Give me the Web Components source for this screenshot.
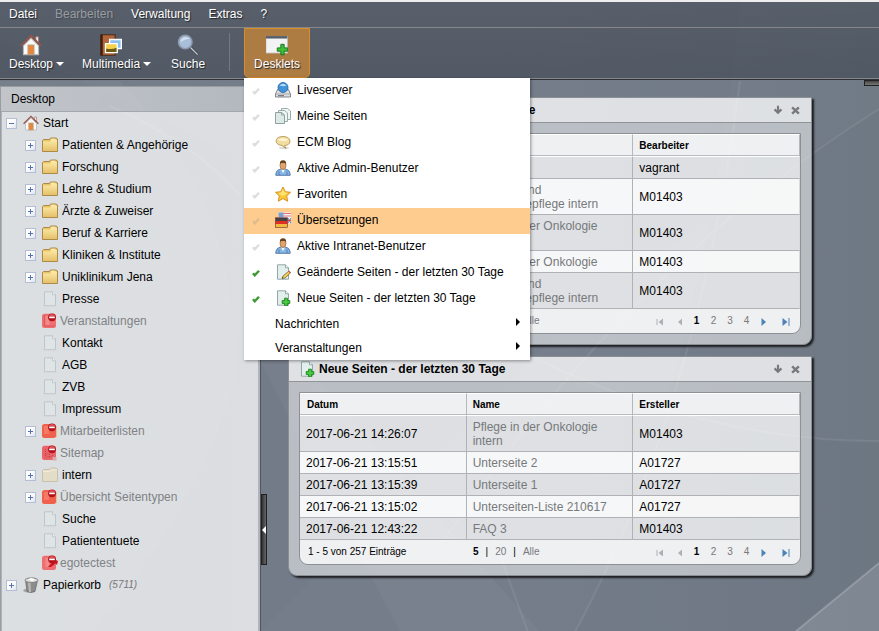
<!DOCTYPE html>
<html lang="de">
<head>
<meta charset="utf-8">
<title>Desktop</title>
<style>
    html, body {
        margin: 0;
        height: 100%;
    }
    body {
        font: 12px/14px 'Liberation Sans', Arial, sans-serif;
        color: #000000;
    }
</style>
</head>
<body>
<ecm-desktop>
    <ecm-menubar slot="header"></ecm-menubar>
    <ecm-toolbar slot="header">
        <ecm-tool icon="home" arrow>Desktop</ecm-tool>
        <ecm-tool icon="media" arrow>Multimedia</ecm-tool>
        <ecm-tool icon="search">Suche</ecm-tool>
        <ecm-tool icon="desklet" slot="end" active>Desklets
            <ecm-menu slot="menu">
                <ecm-item icon="server">Liveserver</ecm-item>
                <ecm-item icon="pages">Meine Seiten</ecm-item>
                <ecm-item icon="bubble">ECM Blog</ecm-item>
                <ecm-item icon="user">Aktive Admin-Benutzer</ecm-item>
                <ecm-item icon="star">Favoriten</ecm-item>
                <ecm-item icon="flags" selected>Übersetzungen</ecm-item>
                <ecm-item icon="user">Aktive Intranet-Benutzer</ecm-item>
                <ecm-item icon="pageedit" checked>Geänderte Seiten - der letzten 30 Tage</ecm-item>
                <ecm-item icon="pagenew" checked>Neue Seiten - der letzten 30 Tage</ecm-item>
                <ecm-item submenu>Nachrichten</ecm-item>
                <ecm-item submenu>Veranstaltungen</ecm-item>
            </ecm-menu>
        </ecm-tool>
    </ecm-toolbar>
    <ecm-sidebar slot="sidebar" heading="Desktop">
        <ecm-node icon="home" toggle="minus">Start</ecm-node>
        <ecm-node level="2" icon="folder" toggle="plus">Patienten &amp; Angehörige</ecm-node>
        <ecm-node level="2" icon="folder" toggle="plus">Forschung</ecm-node>
        <ecm-node level="2" icon="folder" toggle="plus">Lehre &amp; Studium</ecm-node>
        <ecm-node level="2" icon="folder" toggle="plus">Ärzte &amp; Zuweiser</ecm-node>
        <ecm-node level="2" icon="folder" toggle="plus">Beruf &amp; Karriere</ecm-node>
        <ecm-node level="2" icon="folder" toggle="plus">Kliniken &amp; Institute</ecm-node>
        <ecm-node level="2" icon="folder" toggle="plus">Uniklinikum Jena</ecm-node>
        <ecm-node level="2" icon="page">Presse</ecm-node>
        <ecm-node level="2" icon="lockedpage" locked>Veranstaltungen</ecm-node>
        <ecm-node level="2" icon="page">Kontakt</ecm-node>
        <ecm-node level="2" icon="page">AGB</ecm-node>
        <ecm-node level="2" icon="page">ZVB</ecm-node>
        <ecm-node level="2" icon="page">Impressum</ecm-node>
        <ecm-node level="2" icon="lockedfolder" toggle="plus" locked>Mitarbeiterlisten</ecm-node>
        <ecm-node level="2" icon="lockedmap" locked>Sitemap</ecm-node>
        <ecm-node level="2" icon="palefolder" toggle="plus">intern</ecm-node>
        <ecm-node level="2" icon="lockedfolder" toggle="plus" locked>Übersicht Seitentypen</ecm-node>
        <ecm-node level="2" icon="page">Suche</ecm-node>
        <ecm-node level="2" icon="page">Patiententuete</ecm-node>
        <ecm-node level="2" icon="lockedlink" locked>egotectest</ecm-node>
        <ecm-node icon="trash" toggle="plus" count="(5711)">Papierkorb</ecm-node>
    </ecm-sidebar>
    <ecm-window icon="pageedit" heading="Geänderte Seiten - der letzten 30 Tage">
        <ecm-list id="changed"></ecm-list>
    </ecm-window>
    <ecm-window icon="pagenew" heading="Neue Seiten - der letzten 30 Tage">
        <ecm-list id="created"></ecm-list>
    </ecm-window>
</ecm-desktop>

<script>
(() => {
    const stop = `
        <circle cx="10" cy="4.300" r="3.900" fill="#b3121b"/>
        <path d="M6.800 3a3.600 3.600 0 0 1 6.400 0z" fill="#d9555a"/>
        <rect x="7.200" y="3.500" width="5.600" height="1.700" fill="#fff"/>`;
    const sheet = `
        <path d="M2.500 .8h8l3 3v11.400h-11z" fill="#e2efec" stroke="#93a7a8"/>
        <path d="M10.500 .8v3h3" fill="#fff" stroke="#93a7a8"/>`;
    const icons = {
        home: `
            <path d="M2.500 8.500v6.500h11v-6.500l-5.500-5.500z" fill="#fafafa" stroke="#b9b9b9" stroke-width=".8"/>
            <path d="M11.500 2h2v5l-2-2z" fill="#eee" stroke="#a07068" stroke-width=".6"/>
            <path d="M.6 8.700L8 1.300l7.400 7.400" fill="none" stroke="#94544a" stroke-width="1.300"/>
            <rect x="5.800" y="8" width="4.400" height="7" fill="#e8863a" stroke="#b9a08c" stroke-width=".7"/>`,
        media: `
            <path d="M.5 .5h10.500v15H.5z" fill="#b0663a" stroke="#4a2a1a" stroke-width=".8"/>
            <path d="M.5 .5h1.500v15H.5z" fill="#40200f"/>
            <path d="M7 4h8.500v6.500H7z" fill="#8cc0f0" stroke="#fff"/>
            <path d="M4 7h8.500v6.500H4z" fill="#f5d04a" stroke="#fff"/>
            <path d="M4.500 10.500q4 1 7.500-.5v3h-7.500z" fill="#6d5a14"/>`,
        search: `
            <path d="M9.800 9.800L15 15" stroke="#3a4049" stroke-width="2"/>
            <path d="M9.800 9.800L15 15" stroke="#c8ccd2" stroke-width="1"/>
            <circle cx="6" cy="5.800" r="4.900" fill="#a9bfd9" stroke="#8c9bb0" stroke-width="1.200"/>
            <path d="M2.500 6a4 4 0 0 1 7-2.500q-3 0-7 2.500z" fill="#d0deee"/>`,
        desklet: `
            <rect x="0" y="1.800" width="15.500" height="12" fill="#f3f3f3" stroke="#c9c9c9" stroke-width=".6"/>
            <rect x="0" y="1.500" width="15.500" height="1.800" fill="#55606c"/>
            <path d="M10.800 7.500h2.400v2.600h2.600v2.400h-2.600v2.600h-2.400v-2.600H8.200v-2.400h2.600z" fill="#3fbf35" stroke="#16751c" stroke-width=".7"/>`,
        folder: `
            <path d="M.5 3.500l1-1h6l1-1.500h5.500l1.500 1v12.500H.5z" fill="#e9c468" stroke="#a5823c" stroke-width=".9"/>
            <path d="M1 4.500h7l1.500-1.500H15v11H1z" fill="url(#f)"/>
            <path d="M9 2.300h4.500" stroke="#fff5cf"/>
            <defs><linearGradient id="f" x2="0" y2="1"><stop stop-color="#fbeaa4"/><stop offset="1" stop-color="#e5c06b"/></linearGradient></defs>`,
        palefolder: `
            <path d="M.5 3.500l1-1h6l1-1.500h5.500l1.500 1v12.500H.5z" fill="#e3dcc7" stroke="#c5bda8" stroke-width=".9"/>
            <path d="M1 4.500h7l1.500-1.500H15" fill="none" stroke="#f2edda"/>`,
        page: `
            <path d="M2.500 .8h8l3 3v10.700h-11z" fill="#dfe5e6" stroke="#bdc7cb"/>
            <path d="M10.500 .8v3h3" fill="#f3f5f5" stroke="#bdc7cb"/>
            <path d="M1.500 14.800h13" stroke="#c9ced1"/>`,
        lockedpage: `<rect x="0" y=".8" width="14" height="14.200" rx="2.500" fill="#ed6f71"/>
            <path d="M2.500 2v11h10" fill="none" stroke="#dc5054" stroke-width=".8"/>
            <path d="M3.500 3h4v9h-4z" fill="#f38a89"/>${stop}`,
        lockedfolder: `<path d="M12 3h3v11h-3z" fill="#e1c389"/>
            <rect x="0" y="1" width="14" height="14" rx="2.500" fill="#f0604f"/>
            <path d="M2 3h5v8H2z" fill="#f47a66"/>${stop}`,
        lockedmap: `<rect x="0" y=".8" width="14" height="14.200" rx="2.500" fill="#ea6569"/>
            <path d="M3.500 4v8h7V9M3.500 9h4v4" fill="none" stroke="#b83a45" stroke-width=".8" stroke-dasharray="1 1"/>
            <path d="M10.500 12h4v3.500h-4z" fill="#dba9aa"/>${stop}`,
        lockedlink: `<rect x="0" y=".8" width="14" height="14.200" rx="2.500" fill="#ed6f71"/>
            <path d="M3.500 3h4v9h-4z" fill="#f38a89"/>
            <path d="M6 12l3.500-4-1.500-2 4-2 4 2-1 4-1.500-1.500L9 12z" fill="#cc1720"/>${stop}`,
        trash: `
            <ellipse cx="6" cy="13.500" rx="5.800" ry="2" fill="#a4a6a9"/>
            <path d="M2.500 3.500l1.500 11q4 1.800 8 0l2.500-11z" fill="#8c8c8c" stroke="#666" stroke-width=".7"/>
            <path d="M5 5.500l1 9.500h2l-.5-9.500z" fill="#b9b9b9"/>
            <ellipse cx="8.500" cy="3.200" rx="6.500" ry="2.300" fill="#dcdcdc" stroke="#858585"/>
            <path d="M5 2.500l3-1.500 4 1.300-2 2z" fill="#fff"/>`,
        server: `
            <path d="M2.500 7.500h11l2 4.500v3H.5v-3z" fill="#dddfe3" stroke="#777b84" stroke-width=".9"/>
            <path d="M1 12h14" stroke="#a3a6ad"/><path d="M3 13.700h6" stroke="#60646c"/>
            <circle cx="8" cy="5.500" r="5" fill="#4293d8" stroke="#23609f" stroke-width=".8"/>
            <path d="M4.500 3.500q3.500-3.500 7 0-3 1.500-7 0z" fill="#b3ddf8"/>`,
        pages: `
            <path d="M6.500.5h6l3 2.500v8.500h-9z" fill="#eef5f3" stroke="#8fa5a4" stroke-width=".9"/>
            <path d="M3.500 2.500h6l3 2.500v8.500h-9z" fill="#eef5f3" stroke="#8fa5a4" stroke-width=".9"/>
            <path d="M.5 4.500h6l3 2.500v8.500h-9z" fill="#dce9e5" stroke="#849a99" stroke-width=".9"/>
            <path d="M6.500 4.500V7h3" fill="none" stroke="#849a99" stroke-width=".8"/>`,
        bubble: `
            <ellipse cx="9" cy="14" rx="5" ry="1.200" fill="#dddddd"/>
            <path d="M8 2.500c9 0 9 9 1.500 9l1.500 3-4-3C-1 11-1 2.500 8 2.500z" fill="#f2dda0" stroke="#b49551" stroke-width=".9"/>
            <path d="M2.500 6q5-3.500 11 0-4 2-11 0z" fill="#fff6d4"/>`,
        user: `
            <path d="M.8 15.300q0-5.300 4.500-6h5.400q4.500.7 4.500 6z" fill="#87b6e6" stroke="#47719f" stroke-width=".9"/>
            <path d="M6 9.300l2 4 2-4z" fill="#f5f8fc"/>
            <ellipse cx="8" cy="5.500" rx="3" ry="4" fill="#dfa36b" stroke="#8d592f" stroke-width=".6"/>
            <path d="M4.900 4.500q-.4-4.200 3.100-4.200t3.100 4.200L10 3H6z" fill="#654321"/>
            <path d="M4 11.500v3.500M12 11.500v3.500" stroke="#47719f" stroke-width=".8"/>`,
        star: `
            <path d="M8 1l2.300 4.700 5.200.6-3.800 3.600 1 5.300L8 12.600l-4.700 2.600 1-5.300L.5 6.300l5.200-.6z" fill="#fbc834" stroke="#d18a1e" stroke-width=".9" stroke-linejoin="round"/>
            <path d="M8 3l1.500 3.500 3.500.5-5 3-5-3 3.500-.5z" fill="#fee27a"/>`,
        flags: `
            <rect x="3.500" y=".5" width="12.500" height="11" fill="#f3f3fa"/>
            <path d="M8 1.500h8M8 4h8" stroke="#e2757a"/>
            <rect x="3.500" y=".5" width="5" height="5" fill="#7f9fcb"/>
            <path d="M13 6l3 5.500M16 6l-3 5" stroke="#5f80b8"/>
            <path d="M12.500 8.500h3.500" stroke="#d8444c" stroke-width="1.300"/>
            <rect x=".5" y="5.800" width="12" height="3.200" fill="#444"/>
            <rect x=".5" y="9" width="12" height="3.200" fill="#e02c22"/>
            <rect x=".5" y="12.200" width="12" height="3" fill="#f0b93a"/>
            <rect x=".5" y="5.800" width="12" height="9.600" fill="none" stroke="#762724" stroke-width=".6"/>`,
        pageedit: `${sheet}
            <path d="M7 14.500l1-2.500 6-5 1.700 1.700-5.700 5.300z" fill="#f1d15e" stroke="#7c6228" stroke-width=".8"/>
            <path d="M13.200 7.600l1-.9 1.600 1.600-.9 1z" fill="#d95a52"/>
            <path d="M7 14.500l.5-1.400.9.800z" fill="#333"/>`,
        pagenew: `${sheet}
            <path d="M9.600 8.200h2.800v2.400h2.400v2.800h-2.400v2.400H9.600v-2.400H7.200v-2.800h2.400z" fill="#4ccb43" stroke="#15821d" stroke-width=".9"/>`,
        check: `<path d="M2 8.500l3.500 4L14 3.500" fill="none" stroke="currentColor" stroke-width="5"/>`,
        down: `<path d="M8 1v10M2.500 7L8 12.500 13.500 7" fill="none" stroke="currentColor" stroke-width="3.400"/>`,
        close: `<path d="M2 2.500l12 11M14 2.500l-12 11" stroke="currentColor" stroke-width="4.400"/>`,
        first: `<path d="M2 2v12" stroke="currentColor" stroke-width="2"/><path d="M14 1v14L5 8z" fill="currentColor"/>`,
        prev: `<path d="M12 1v14L4 8z" fill="currentColor"/>`,
        next: `<path d="M3 0v16l9-8z" fill="currentColor"/>`,
        last: `<path d="M14 0v16" stroke="currentColor" stroke-width="2"/><path d="M1 0v16l10-8z" fill="currentColor"/>`
    };

    const svg = (name, size) => `<svg width="${size}" height="${size}" viewBox="0 0 16 16" aria-hidden="true">${icons[name]}</svg>`;

    // attributes are read when the element is connected, so markup order does not matter
    class Base extends HTMLElement {
        constructor() {
            super();
            this.attachShadow({ mode: 'open' });
        }
        connectedCallback() {
            this.shadowRoot.innerHTML = this.render();
        }
        attr(name) {
            return this.getAttribute(name) || '';
        }
    }

    const rays = encodeURIComponent(`
        <svg xmlns="http://www.w3.org/2000/svg" viewBox="0 0 879 631" preserveAspectRatio="xMidYMid slice">
            <g fill="#fff">
                <path d="M795 631l84-69v69z" fill-opacity=".13"/>
                <path d="M575 631Q700 400 740 0h139v108Q600 280 520 370L260 631z" fill-opacity=".02"/>
                <path d="M0 40L330 200 520 360Q690 440 879 440V0H0z" fill-opacity=".02"/>
                <path d="M0 80h120Q240 200 235 380 190 520 90 631H0z" fill-opacity=".03"/>
                <path d="M260 360l40 0 240 271H400z" fill-opacity=".03"/>
            </g>
            <g fill="none" stroke="#fff" stroke-opacity=".08" stroke-width="2">
                <path d="M795 631l84-69" stroke-opacity=".2"/>
                <path d="M575 631Q700 400 740 80"/>
                <path d="M879 108Q620 270 430 560"/>
                <path d="M520 350Q700 440 879 440"/>
                <path d="M480 500l48 131"/>
                <path d="M110 105q90 40 130 90"/>
            </g>
        </svg>`);

    customElements.define('ecm-desktop', class extends Base {
        render() {
            return `
            <style>
                :host {
                    display: flex;
                    flex-direction: column;
                    min-height: 100vh;
                    box-sizing: border-box;
                    border-top: 2px solid #efeeec;
                    background: url("data:image/svg+xml,${rays}") center / cover, linear-gradient(90deg, #727b87, #737b89 60%, #6d7782);
                }
                header {
                    position: relative;
                    z-index: 2;
                    border-bottom: 1px solid #2f3339;
                    background: linear-gradient(rgba(60,66,76,0.5), rgba(50,57,67,0.52));
                }
                main {
                    flex: 1;
                    display: flex;
                    position: relative;
                }
                .canvas {
                    flex: 1;
                    min-width: 0;
                    display: flex;
                    flex-direction: column;
                    gap: 11px;
                    padding: 17px 67px 17px 27px;
                }
                .tab {
                    position: absolute;
                    top: 0;
                    right: 0;
                    width: 15px;
                    height: 6px;
                    padding: 0;
                    border: 1px solid #222222;
                    border-right: 0;
                    background: linear-gradient(#444444, #777777);
                }
            </style>
            <header><slot name="header"></slot></header>
            <main>
                <slot name="sidebar"></slot>
                <div class="canvas"><slot></slot></div>
                <button class="tab" aria-label="Leiste öffnen"></button>
            </main>`;
        }
    });

    customElements.define('ecm-menubar', class extends Base {
        render() {
            const entries = ['Datei', 'Bearbeiten', 'Verwaltung', 'Extras', '?'];
            return `
            <style>
                :host {
                    display: block;
                    border-bottom: 1px solid #858789;
                }
                nav {
                    display: flex;
                }
                button {
                    height: 25px;
                    padding: 0 9px 2px;
                    border: 0;
                    background: none;
                    color: #ffffff;
                    font: inherit;
                    text-shadow: 1px 1px 1px #22262c;
                }
                button:disabled {
                    color: #989ca2;
                    text-shadow: 1px 1px 1px #444a53;
                }
            </style>
            <nav>${entries.map(e => `<button ${e === 'Bearbeiten' ? 'disabled' : ''}>${e}</button>`).join('')}</nav>`;
        }
    });

    customElements.define('ecm-toolbar', class extends Base {
        render() {
            return `
            <style>
                :host {
                    display: flex;
                    height: 50px;
                    border-bottom: 1px solid #858789;
                }
                .line {
                    width: 1px;
                    height: 38px;
                    margin: 5px 14px 0 13px;
                    background: #747981;
                }
            </style>
            <slot></slot>
            <div class="line"></div>
            <slot name="end"></slot>`;
        }
    });

    customElements.define('ecm-tool', class extends Base {
        render() {
            return `
            <style>
                :host {
                    display: block;
                    position: relative;
                    min-width: 56px;
                }
                :host([active]) {
                    min-width: 66px;
                }
                button {
                    display: grid;
                    grid-template-columns: auto auto;
                    grid-template-rows: 22px 14px;
                    column-gap: 3px;
                    row-gap: 1px;
                    align-content: start;
                    justify-content: center;
                    justify-items: center;
                    align-items: center;
                    width: 100%;
                    height: 50px;
                    padding: 5px 8px 0;
                    border: 1px solid transparent;
                    background: none;
                    color: #ffffff;
                    font: inherit;
                    text-shadow: 1px 1px 1px #22262c;
                }
                button.plain {
                    grid-template-columns: auto;
                }
                button svg {
                    grid-row: 1;
                    grid-column: 1;
                }
                .label {
                    grid-row: 2;
                    white-space: nowrap;
                }
                .arrow {
                    grid-row: 2;
                    border: 4px solid transparent;
                    border-top-color: #ffffff;
                    border-bottom: 0;
                }
                :host([active]) button {
                    border-color: #d98c28;
                    border-radius: 0 0 5px 5px;
                    background: #ad7c43;
                }
            </style>
            <button class="${this.hasAttribute('arrow') ? '' : 'plain'}">
                ${svg(this.attr('icon'), 22)}
                <span class="label"><slot></slot></span>
                ${this.hasAttribute('arrow') ? '<span class="arrow"></span>' : ''}
            </button>
            <slot name="menu"></slot>`;
        }
    });

    customElements.define('ecm-menu', class extends Base {
        render() {
            return `
            <style>
                :host {
                    display: block;
                    position: absolute;
                    top: 50px;
                    left: 0;
                    width: 286px;
                    background: #ffffff;
                    box-shadow: 1px 1px 3px rgba(0,0,0,0.4);
                }
            </style>
            <div role="menu"><slot></slot></div>`;
        }
    });

    customElements.define('ecm-item', class extends Base {
        render() {
            const sub = this.hasAttribute('submenu');
            const start = sub ? '<span></span>' : `<span class="check">${svg('check', 8)}</span>${svg(this.attr('icon'), 16)}`;
            return `
            <style>
                :host {
                    display: block;
                }
                button {
                    display: grid;
                    grid-template-columns: 25px 16px 1fr;
                    column-gap: 6px;
                    align-items: center;
                    width: 100%;
                    height: 26px;
                    padding: 0 0 2px;
                    border: 0;
                    background: none;
                    color: #000000;
                    font: inherit;
                    text-align: left;
                }
                button.sub {
                    grid-template-columns: 25px 1fr 14px;
                    height: 24px;
                    padding: 0;
                }
                .check {
                    padding: 2px 0 0 8px;
                    color: #dedede;
                    line-height: 8px;
                }
                :host([checked]) .check {
                    color: #429a35;
                }
                :host([selected]) button {
                    background: #ffcc8f;
                }
                :host([selected]) .check {
                    color: #e0bb8b;
                }
                .arrow {
                    margin-bottom: 4px;
                    border: 4px solid transparent;
                    border-left-color: #000000;
                    border-right: 0;
                    justify-self: start;
                }
            </style>
            <button role="${sub ? 'menuitem' : 'menuitemcheckbox'}" class="${sub ? 'sub' : ''}">
                ${start}<span><slot></slot></span>${sub ? '<span class="arrow"></span>' : ''}
            </button>`;
        }
    });

    customElements.define('ecm-sidebar', class extends Base {
        render() {
            return `
            <style>
                :host {
                    display: flex;
                    flex-direction: column;
                    position: relative;
                    flex: 0 0 261px;
                    box-sizing: border-box;
                    margin-top: 6px;
                    border: 1px solid #999da3;
                    border-bottom: 0;
                    border-right: 1px solid #50565f;
                }
                h2 {
                    margin: 0;
                    padding: 5px 10px;
                    border-bottom: 1px solid #a4a8ae;
                    background: linear-gradient(90deg, rgba(255,255,255,0.55), rgba(255,255,255,0.45));
                    font: inherit;
                }
                .tree {
                    flex: 1;
                    border: 1px solid #b0b4ba;
                    border-width: 0 2px 0 1px;
                    background: rgba(255,255,255,0.75);
                }
                .handle {
                    position: absolute;
                    right: -7px;
                    bottom: 66px;
                    display: flex;
                    align-items: center;
                    justify-content: center;
                    width: 6px;
                    height: 71px;
                    padding: 0;
                    border: 1px solid #202020;
                    background: linear-gradient(90deg, #333333, #666666);
                }
                .handle span {
                    border: 4px solid transparent;
                    border-right-color: #ffffff;
                    border-left: 0;
                }
            </style>
            <h2>${this.attr('heading')}</h2>
            <nav class="tree"><slot></slot></nav>
            <button class="handle" aria-label="Leiste einklappen"><span></span></button>`;
        }
    });

    customElements.define('ecm-node', class extends Base {
        render() {
            const toggle = this.attr('toggle');
            const count = this.attr('count');
            return `
            <style>
                :host {
                    display: flex;
                    align-items: center;
                    height: 22px;
                    padding-left: 4px;
                }
                :host([level="2"]) {
                    padding-left: 23px;
                }
                .toggle {
                    flex: none;
                    width: 11px;
                    height: 11px;
                    margin-right: 6px;
                    padding: 0;
                    border: 0;
                }
                button.toggle {
                    border: 1px solid #b4bfd6;
                    background:
                        linear-gradient(#5472ab, #5472ab) center / 5px 1px no-repeat,
                        linear-gradient(135deg, #ffffff 40%, #dde3ef);
                }
                button.plus {
                    background:
                        linear-gradient(#5472ab, #5472ab) center / 5px 1px no-repeat,
                        linear-gradient(#5472ab, #5472ab) center / 1px 5px no-repeat,
                        linear-gradient(135deg, #ffffff 40%, #dde3ef);
                }
                svg {
                    flex: none;
                }
                a {
                    margin-left: 4px;
                    color: inherit;
                    text-decoration: none;
                    white-space: nowrap;
                }
                :host([locked]) a {
                    margin-left: 2px;
                    color: #808285;
                }
                i {
                    margin-left: 8px;
                    color: #75777a;
                    font-size: 10px;
                }
            </style>
            ${toggle ? `<button class="toggle ${toggle}" aria-label="Umschalten"></button>` : '<span class="toggle"></span>'}
            ${svg(this.attr('icon'), 16)}
            <a href="#"><slot></slot></a>
            ${count ? `<i>${count}</i>` : ''}`;
        }
    });

    customElements.define('ecm-window', class extends Base {
        render() {
            return `
            <style>
                :host {
                    display: block;
                    border: 1px solid #8b8f94;
                    border-radius: 0 0 9px 9px;
                    box-shadow: 2px 2px 2px rgba(0,0,0,0.75);
                }
                .title {
                    display: flex;
                    align-items: center;
                    height: 24px;
                    padding: 0 11px 0 10px;
                    border-bottom: 1px solid #909499;
                    background: rgba(255,255,255,0.77);
                }
                h2 {
                    flex: 1;
                    margin: 0 0 0 4px;
                    font-size: 12px;
                    line-height: 14px;
                }
                button {
                    display: flex;
                    margin-left: 8px;
                    padding: 0;
                    border: 0;
                    background: none;
                    color: #77797c;
                }
                .body {
                    padding: 10px;
                    border-radius: 0 0 8px 8px;
                    background: rgba(255,255,255,0.5);
                }
            </style>
            <div class="title">
                ${svg(this.attr('icon'), 16)}
                <h2>${this.attr('heading')}</h2>
                <button aria-label="Minimieren">${svg('down', 10)}</button>
                <button aria-label="Schließen">${svg('close', 9)}</button>
            </div>
            <div class="body"><slot></slot></div>`;
        }
    });

    customElements.define('ecm-list', class extends Base {
        set data(data) {
            this.shadowRoot.innerHTML = `
            <style>
                :host {
                    display: block;
                    overflow: hidden;
                    border: 1px solid #8d9196;
                    border-radius: 0 0 9px 9px;
                }
                table {
                    width: 100%;
                    table-layout: fixed;
                    border-spacing: 0;
                }
                th {
                    box-sizing: border-box;
                    height: 23px;
                    padding: 0 6px;
                    border: 1px solid #ffffff;
                    border-width: 1px 0;
                    border-right: 1px solid #b5b7ba;
                    background: rgba(255,255,255,0.77);
                    box-shadow: inset 0 -1px #b9bbbe;
                    font-size: 10px;
                    text-align: left;
                }
                th:first-child {
                    padding-left: 7px;
                }
                td {
                    padding: 4px 6px 3px;
                    border-right: 1px solid #b0b2b5;
                    border-bottom: 1px solid #b0b2b5;
                    background: rgba(255,255,255,0.87);
                }
                tr:nth-child(odd) td {
                    background: rgba(255,255,255,0.52);
                }
                td:last-child {
                    border-right-color: #d8dadc;
                }
                a {
                    color: #77797b;
                    text-decoration: none;
                }
                .foot {
                    display: grid;
                    grid-template-columns: 33% 33% 1fr;
                    align-items: center;
                    height: 24px;
                    background: rgba(255,255,255,0.77);
                    font-size: 10px;
                }
                .count {
                    padding-left: 8px;
                }
                .sizes {
                    display: flex;
                    gap: 7px;
                    padding-left: 8px;
                }
                .pager {
                    display: grid;
                    grid-template-columns: 24px 16px 17px 17px 16px 17px 17px 28px;
                    justify-content: end;
                    justify-items: center;
                    align-items: center;
                    text-align: center;
                }
                .pager button {
                    display: flex;
                    padding: 2px 0 0;
                    border: 0;
                    background: none;
                    color: #4c82b5;
                }
                .pager button:disabled {
                    color: #aeb1b4;
                }
            </style>
            <table>
                <thead><tr>${data.columns.map(c => `<th scope="col">${c}</th>`).join('')}</tr></thead>
                <tbody>${data.rows.map(r => `<tr><td>${r[0]}</td><td><a href="#">${r[1]}</a></td><td>${r[2]}</td></tr>`).join('')}</tbody>
            </table>
            <div class="foot">
                <span class="count">${data.count}</span>
                <span class="sizes"><b>5</b> <span>|</span> <a href="#">20</a> <span>|</span> <a href="#">Alle</a></span>
                <span class="pager">
                    <button disabled aria-label="Erste Seite">${svg('first', 8)}</button>
                    <button disabled aria-label="Vorherige Seite">${svg('prev', 8)}</button>
                    <b>1</b><a href="#">2</a><a href="#">3</a><a href="#">4</a>
                    <button aria-label="Nächste Seite">${svg('next', 8)}</button>
                    <button aria-label="Letzte Seite">${svg('last', 8)}</button>
                </span>
            </div>`;
        }
        connectedCallback() {}
    });

    document.querySelector('#changed').data = {
        columns: ['', '', 'Bearbeiter'],
        count: '',
        rows: [
            ['', '', 'vagrant'],
            ['', 'Intensiv- und Anästhesiepflege intern', 'M01403'],
            ['', 'Pflege in der Onkologie intern', 'M01403'],
            ['', 'Pflege in der Onkologie', 'M01403'],
            ['', 'Intensiv- und Anästhesiepflege intern', 'M01403']
        ]
    };
    document.querySelector('#created').data = {
        columns: ['Datum', 'Name', 'Ersteller'],
        count: '1 - 5 von 257 Einträge',
        rows: [
            ['2017-06-21 14:26:07', 'Pflege in der Onkologie intern', 'M01403'],
            ['2017-06-21 13:15:51', 'Unterseite 2', 'A01727'],
            ['2017-06-21 13:15:39', 'Unterseite 1', 'A01727'],
            ['2017-06-21 13:15:02', 'Unterseiten-Liste 210617', 'A01727'],
            ['2017-06-21 12:43:22', 'FAQ 3', 'M01403']
        ]
    };
})();
</script>
</body>
</html>
